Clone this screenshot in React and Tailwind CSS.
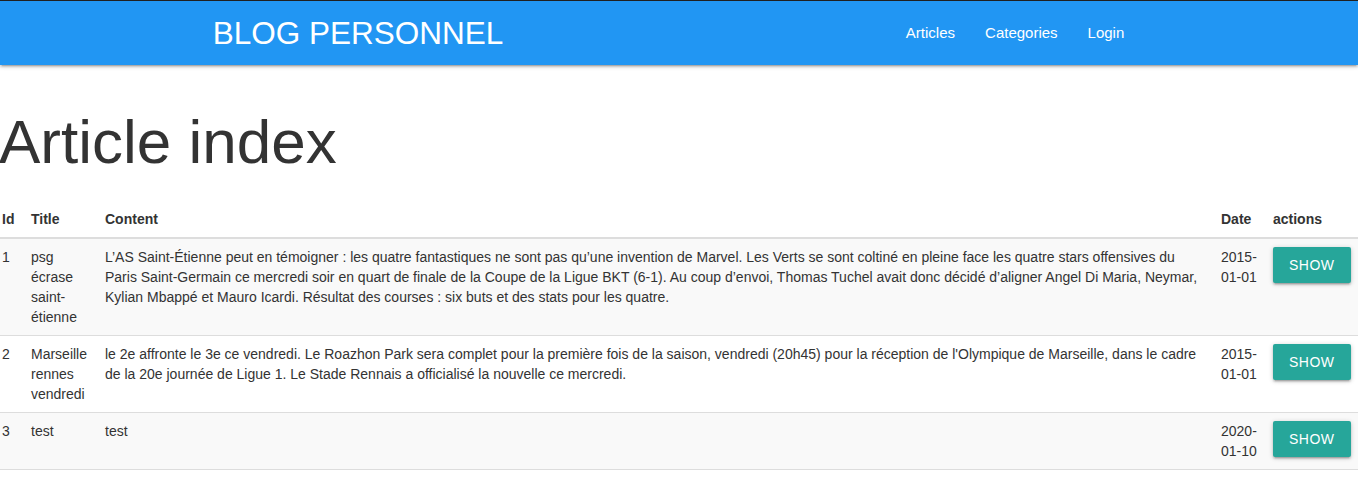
import React from 'react';

const articles = [
  {
    id: 1,
    title: 'psg écrase saint-étienne',
    content:
      "L’AS Saint-Étienne peut en témoigner : les quatre fantastiques ne sont pas qu’une invention de Marvel. Les Verts se sont coltiné en pleine face les quatre stars offensives du Paris Saint-Germain ce mercredi soir en quart de finale de la Coupe de la Ligue BKT (6-1). Au coup d’envoi, Thomas Tuchel avait donc décidé d’aligner Angel Di Maria, Neymar, Kylian Mbappé et Mauro Icardi. Résultat des courses : six buts et des stats pour les quatre.",
    date: '2015-01-01',
  },
  {
    id: 2,
    title: 'Marseille rennes vendredi',
    content:
      "le 2e affronte le 3e ce vendredi. Le Roazhon Park sera complet pour la première fois de la saison, vendredi (20h45) pour la réception de l'Olympique de Marseille, dans le cadre de la 20e journée de Ligue 1. Le Stade Rennais a officialisé la nouvelle ce mercredi.",
    date: '2015-01-01',
  },
  { id: 3, title: 'test', content: 'test', date: '2020-01-10' },
];

function DateCell({ value }) {
  const [y, rest] = [value.slice(0, 4), value.slice(5)];
  return (
    <>
      {y}-
      <br />
      {rest}
    </>
  );
}

export default function App() {
  return (
    <div className="min-h-screen bg-white text-[#333] overflow-x-hidden font-['Liberation_Sans',Arial,sans-serif] text-[14px] leading-[20px]">
      <div className="h-px bg-[#222]" />
      {/* Navbar */}
      <nav className="h-16 bg-[#2196F3] text-white shadow-[0_2px_2px_0_rgba(0,0,0,0.14),0_3px_1px_-2px_rgba(0,0,0,0.12),0_1px_5px_0_rgba(0,0,0,0.2)] relative">
        <div className="w-[70%] mx-auto h-full flex items-center justify-between">
          <a className="pl-[9px] text-[31.5px] leading-[64px]">BLOG PERSONNEL</a>
          <ul className="flex h-full items-center mr-[15px]">
            <li><a className="px-[15px] text-[15px] leading-[64px] block">Articles</a></li>
            <li><a className="px-[15px] text-[15px] leading-[64px] block">Categories</a></li>
            <li><a className="px-[15px] text-[15px] leading-[64px] block">Login</a></li>
          </ul>
        </div>
      </nav>

      <div className="ml-[-6px]">
        <h1 className="ml-[5px] mt-[42.5px] mb-[25.5px] text-[62px] leading-[68.2px] text-[#333]">Article index</h1>

        <table className="table-fixed border-collapse w-[1364px] text-left">
          <colgroup>
            <col className="w-[29px]" />
            <col className="w-[74px]" />
            <col className="w-[1116px]" />
            <col className="w-[52px]" />
            <col className="w-[93px]" />
          </colgroup>
          <thead>
            <tr className="border-b-2 border-[#ddd]">
              <th className="p-2 align-bottom font-bold">Id</th>
              <th className="p-2 align-bottom font-bold">Title</th>
              <th className="p-2 align-bottom font-bold">Content</th>
              <th className="p-2 align-bottom font-bold">Date</th>
              <th className="p-2 align-bottom font-bold">actions</th>
            </tr>
          </thead>
          <tbody>
            {articles.map((a, i) => (
              <tr key={a.id} className={`border-b border-[#ddd] ${i % 2 === 0 ? 'bg-[#f9f9f9]' : 'bg-white'}`}>
                <td className="p-2 align-top">{a.id}</td>
                <td className="p-2 align-top">{a.title}</td>
                <td className="p-2 align-top">{a.content}</td>
                <td className="p-2 align-top"><DateCell value={a.date} /></td>
                <td className="p-2 align-top">
                  <button className="h-9 px-4 rounded-[2px] bg-[#26a69a] text-white text-[14px] tracking-[0.5px] uppercase shadow-[0_2px_2px_0_rgba(0,0,0,0.14),0_3px_1px_-2px_rgba(0,0,0,0.12),0_1px_5px_0_rgba(0,0,0,0.2)]">
                    Show
                  </button>
                </td>
              </tr>
            ))}
          </tbody>
        </table>
      </div>
    </div>
  );
}
